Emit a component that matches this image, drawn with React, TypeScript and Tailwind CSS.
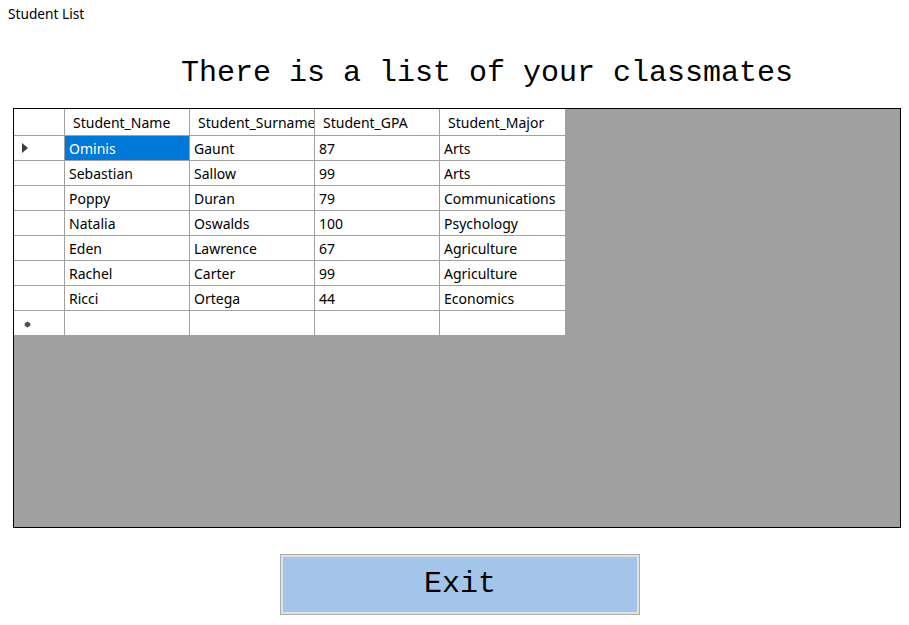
import React from "react";

const rows = [
  ["Ominis", "Gaunt", "87", "Arts"],
  ["Sebastian", "Sallow", "99", "Arts"],
  ["Poppy", "Duran", "79", "Communications"],
  ["Natalia", "Oswalds", "100", "Psychology"],
  ["Eden", "Lawrence", "67", "Agriculture"],
  ["Rachel", "Carter", "99", "Agriculture"],
  ["Ricci", "Ortega", "44", "Economics"],
];

const headers = ["Student_Name", "Student_Surname", "Student_GPA", "Student_Major"];

const ui = { fontFamily: '"Segoe UI", "Noto Sans", "Open Sans", sans-serif' };
const mono = { fontFamily: '"Liberation Mono", "Courier New", monospace' };

export default function App() {
  return (
    <div className="w-[909px] h-[625px] bg-white relative overflow-hidden" style={ui}>
      <div className="pl-[8px] pt-[5px] text-[13.7px] leading-[18px] text-black">Student List</div>
      <div className="pl-[181px] pt-[35px] h-[65px] text-[30px] leading-[30px] text-black whitespace-pre" style={mono}>
        There is a list of your classmates
      </div>
      <div className="ml-[13px] mt-[20px] w-[888px] h-[420px] border border-black bg-[#a0a0a0]">
        <div className="w-[551px] bg-white text-[14px] text-black">
          <div className="flex h-[27px] border-b border-[#a0a0a0]">
            <div className="w-[51px] border-r border-[#a0a0a0]" />
            {headers.map((h, i) => (
              <div
                key={h}
                className={`w-[125px] pl-[8px] pt-[1px] leading-[26px] whitespace-nowrap overflow-hidden ${i < 3 ? "border-r border-[#a0a0a0]" : ""}`}
              >
                {h}
              </div>
            ))}
          </div>
          {rows.map((r, ri) => (
            <div key={ri} className="flex h-[25px] border-b border-[#a0a0a0]">
              <div className="w-[51px] border-r border-[#a0a0a0] flex items-center pl-[8px]">
                {ri === 0 && (
                  <svg width="6" height="10" viewBox="0 0 6 10">
                    <path d="M0 0 L6 5 L0 10 Z" fill="#3c3c3c" />
                  </svg>
                )}
              </div>
              {r.map((c, ci) => (
                <div
                  key={ci}
                  className={`w-[125px] pl-[4px] pt-[1px] leading-[23px] whitespace-nowrap ${ci < 3 ? "border-r border-[#a0a0a0]" : ""} ${ri === 0 && ci === 0 ? "bg-[#0078d7] text-white" : ""}`}
                >
                  {c}
                </div>
              ))}
            </div>
          ))}
          <div className="flex h-[24px]">
            <div className="w-[51px] border-r border-[#a0a0a0] flex items-center pl-[10px] pt-[2px]">
              <svg width="7" height="7" viewBox="0 0 7 7">
                <path d="M3.5 0.5 L6.3 2.2 L6.3 4.8 L3.5 6.5 L0.7 4.8 L0.7 2.2 Z" fill="#505050" />
              </svg>
            </div>
            {[0, 1, 2, 3].map((ci) => (
              <div key={ci} className={`w-[125px] ${ci < 3 ? "border-r border-[#a0a0a0]" : ""}`} />
            ))}
          </div>
        </div>
      </div>
      <div className="ml-[280px] mt-[26px] w-[360px] h-[61px] border border-[#adadad] p-[2px] bg-[#e1e1e1]">
        <div className="w-full h-full bg-[#a3c5e9] flex items-center justify-center text-[30px] text-black" style={mono}>
          Exit
        </div>
      </div>
    </div>
  );
}
